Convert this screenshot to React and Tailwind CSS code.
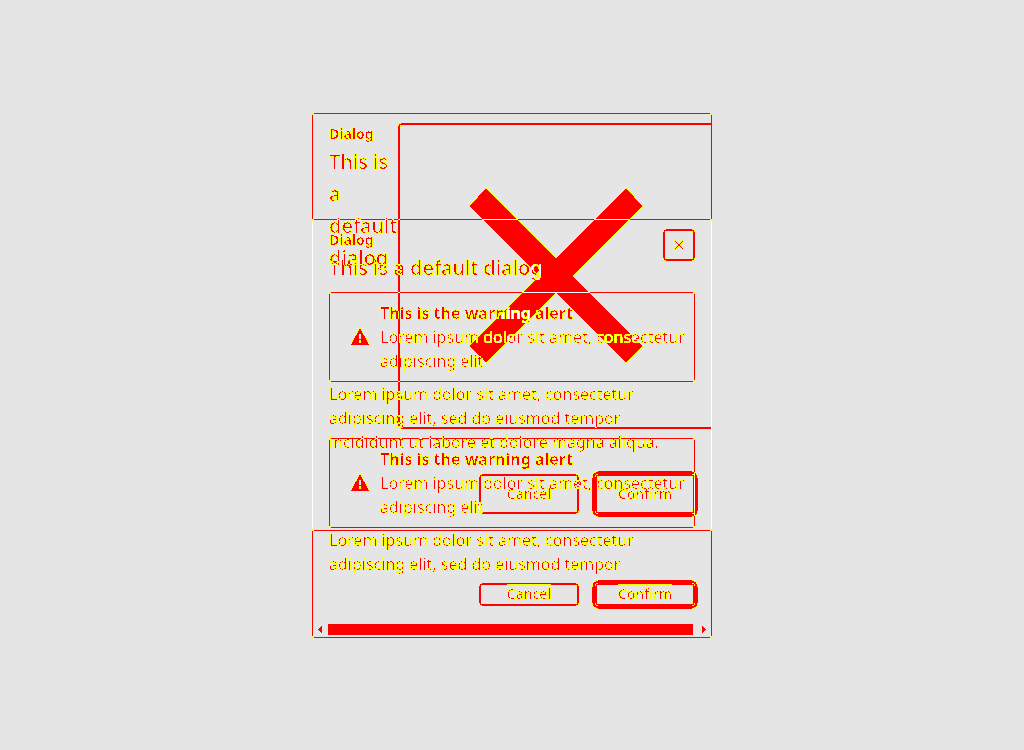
import React from "react";

const WORDS = "Lorem ipsum dolor sit amet, consectetur adipiscing elit";

function CloseIcon({ className }) {
  return (
    <svg viewBox="0 0 174 175" className={className} fill="currentColor" aria-hidden="true">
      <path d="M17 0 87 70 157 0 174 18 104 88 174 158 157 175 87 105 17 175 0 158 70 88 0 18Z" />
    </svg>
  );
}

function WarningIcon() {
  return (
    <svg viewBox="0 0 20 20" className="h-5 w-5 shrink-0" fill="currentColor" aria-hidden="true">
      <path
        fillRule="evenodd"
        d="M10 1.6c.4 0 .7.2.9.5l8.1 14.6c.4.7 0 1.5-.8 1.5H1.8c-.8 0-1.2-.8-.8-1.5L9.100 2.100c.2-.3.5-.5.9-.5ZM9 7v5h2V7H9Zm0 6.500v2h2v-2H9Z"
      />
    </svg>
  );
}

function Header({ className, titleClass, closeClass, iconClass }) {
  return (
    <header className={`flex justify-between px-4 pt-[9px] ${className}`}>
      <div className={titleClass}>
        <p className="mb-[2px] text-sm leading-[21px] font-bold">Dialog</p>
        <h2 className="text-xl leading-8 font-medium">This is a default dialog</h2>
      </div>
      <button
        type="button"
        aria-label="Close"
        className={`flex shrink-0 items-center justify-center rounded-sm border-2 border-white ${closeClass}`}
      >
        <CloseIcon className={iconClass} />
      </button>
    </header>
  );
}

function Alert() {
  return (
    <div role="alert" className="flex items-center gap-[10px] rounded-xs border border-white py-2 pl-5">
      <WarningIcon />
      <div className="leading-6">
        <p className="font-bold">This is the warning alert</p>
        <p>{WORDS}</p>
      </div>
    </div>
  );
}

function Body({ className }) {
  return (
    <div className={`px-4 ${className}`}>
      <Alert />
      <p className="leading-6">{WORDS}, sed do eiusmod tempor incididunt ut labore et dolore magna aliqua.</p>
    </div>
  );
}

function Footer({ buttonHeight, labelClass }) {
  return (
    <footer className="flex justify-end gap-4 px-4 pb-4 text-sm font-medium">
      <button
        type="button"
        className={`flex w-[100px] items-center justify-center rounded-sm border-2 border-white ${buttonHeight}`}
      >
        <span className={labelClass}>Cancel</span>
      </button>
      <button
        type="button"
        className={`flex w-[100px] items-center justify-center rounded-sm border-2 border-white ring-3 ring-white ${buttonHeight}`}
      >
        <span className={labelClass}>Confirm</span>
      </button>
    </footer>
  );
}

function Scrollbar() {
  return (
    <div className="flex h-[15px] items-center justify-between px-[5px]">
      <svg viewBox="0 0 4 7" className="h-[7px] w-1" fill="currentColor" shapeRendering="crispEdges" aria-hidden="true">
        <path d="M4 0v7L0 4V3Z" />
      </svg>
      <div className="mr-[9px] ml-[6px] h-[11px] flex-1 bg-white" />
      <svg viewBox="0 0 4 7" className="h-[7px] w-1" fill="currentColor" shapeRendering="crispEdges" aria-hidden="true">
        <path d="M0 0v7l4-3V3Z" />
      </svg>
    </div>
  );
}

function DiffFilter() {
  return (
    <svg className="absolute h-0 w-0" aria-hidden="true">
      <filter id="diff" x="0" y="0" width="100%" height="100%" colorInterpolationFilters="sRGB">
        <feColorMatrix values="0 0 0 0 1  1 0 0 1 -1  1 0 0 1 -1  0 0 0 1 0" />
        <feComponentTransfer>
          <feFuncG type="discrete" tableValues="1 1 1 1 1 1 1 1 1 0" />
          <feFuncB type="discrete" tableValues="1 0 0 0 0 0 0 0 0 0 0 0 0 0 0 0 0 0 0 0" />
          <feFuncA type="discrete" tableValues="0 1 1 1 1 1 1 1 1 1" />
        </feComponentTransfer>
      </filter>
    </svg>
  );
}

export default function App() {
  return (
    <main className="flex min-h-screen items-center justify-center bg-[#e5e5e5] font-['Noto_Sans','Open_Sans',sans-serif] text-base text-white">
      <DiffFilter />
      <div className="isolate grid w-full max-w-[400px] items-center [filter:url(#diff)]">
        <section className="col-start-1 row-start-1 overflow-hidden rounded-xs border border-white">
          <Header
            className="pb-[9px]"
            titleClass="w-[69px] shrink-0 h-[306px]"
            closeClass="h-[306px] w-[316px]"
            iconClass="h-[175px] w-[174px]"
          />
          <Body className="h-[145px] overflow-hidden [clip-path:inset(0_0_6px_0)]" />
          <Footer buttonHeight="h-[23px]" labelClass="border-t border-t-[#808080] pb-[3px] leading-[17px]" />
          <Scrollbar />
        </section>
        <section className="col-start-1 row-start-1 rounded-xs border border-white mix-blend-difference">
          <Header className="pb-2" titleClass="min-w-0" closeClass="h-8 w-8" iconClass="h-[10px] w-[10px]" />
          <Body className="pb-5" />
          <Footer buttonHeight="h-10" labelClass="leading-5" />
        </section>
      </div>
    </main>
  );
}
